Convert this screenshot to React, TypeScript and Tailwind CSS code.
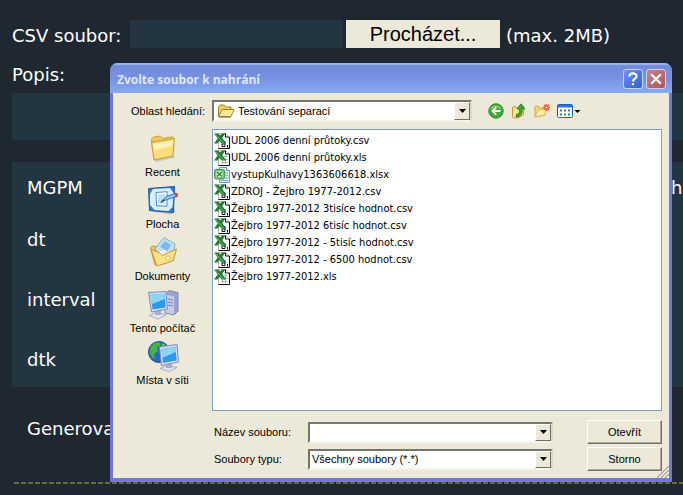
import { useState } from 'react';
import type { ReactNode } from 'react';

type FileKind = 'csv' | 'xls' | 'xlsx';

interface FileEntry {
  name: string;
  kind: FileKind;
}

const FILES: FileEntry[] = [
  { name: 'UDL 2006 denní průtoky.csv', kind: 'csv' },
  { name: 'UDL 2006 denní průtoky.xls', kind: 'xls' },
  { name: 'vystupKulhavy1363606618.xlsx', kind: 'xlsx' },
  { name: 'ZDROJ - Žejbro 1977-2012.csv', kind: 'csv' },
  { name: 'Žejbro 1977-2012 3tisíce hodnot.csv', kind: 'csv' },
  { name: 'Žejbro 1977-2012 6tisíc hodnot.csv', kind: 'csv' },
  { name: 'Žejbro 1977-2012 - 5tisíc hodnot.csv', kind: 'csv' },
  { name: 'Žejbro 1977-2012 - 6500 hodnot.csv', kind: 'csv' },
  { name: 'Žejbro 1977-2012.xls', kind: 'xls' },
];

const PLACES: { label: string; icon: ReactNode }[] = [
  { label: 'Recent', icon: <RecentIcon /> },
  { label: 'Plocha', icon: <DesktopIcon /> },
  { label: 'Dokumenty', icon: <DocumentsIcon /> },
  { label: 'Tento počítač', icon: <ComputerIcon /> },
  { label: 'Místa v síti', icon: <NetworkIcon /> },
];

export default function App() {
  return (
    <div className="relative min-h-screen overflow-hidden bg-[#1f2830] pb-3 font-['DejaVu_Sans',sans-serif] text-lg/6 text-white">
      <UploadForm />
      <FileDialog />
    </div>
  );
}

function UploadForm() {
  return (
    <form className="pt-5 pl-3" onSubmit={(e) => e.preventDefault()}>
      <div className="flex h-7 items-center">
        <label htmlFor="csv" className="w-[118px] shrink-0 whitespace-nowrap pt-1">
          CSV soubor:
        </label>
        <input id="csv" readOnly className="h-7 w-[213px] bg-[#223541] outline-none" />
        <button
          type="button"
          className="ml-[3px] h-7 w-[154px] bg-[#ece9d8] font-['Liberation_Sans',sans-serif] text-xl/7 text-black"
        >
          Procházet...
        </button>
        <span className="ml-1.5 whitespace-nowrap pt-1">(max. 2MB)</span>
      </div>

      <label htmlFor="popis" className="mt-[15px] block">
        Popis:
      </label>
      <textarea id="popis" className="mt-1.5 block h-[47px] w-full resize-none bg-[#223541] outline-none" />

      {/* Parameters */}
      <div className="mt-[22px] bg-[#223541] pt-[14px] pb-[15px] pl-[15px]">
        <div className="flex justify-between">
          <span>MGPM</span>
          <span className="w-3">ha</span>
        </div>
        <div className="mt-7">dt</div>
        <div className="mt-9">interval</div>
        <div className="mt-9">dtk</div>
      </div>

      <div className="mt-[30px] pl-[15px]">Generova</div>
      <div className="mt-[41px] ml-0.5 h-0.5 bg-[repeating-linear-gradient(90deg,#6b6b38_0_5px,transparent_5px_7px)]" />
    </form>
  );
}

function FileDialog() {
  const [fileName, setFileName] = useState('');

  return (
    <div
      role="dialog"
      aria-labelledby="dialog-title"
      className="absolute top-[63px] right-[11px] left-[110px] overflow-hidden rounded-t-lg bg-[#7377d8] px-[3px] pb-1 font-['Liberation_Sans',sans-serif] text-[11px]/4 text-black"
    >
      {/* Title bar */}
      <div className="-mx-[3px] flex h-[30px] items-center bg-linear-to-b from-[#7288d8] via-[#7791e2] to-[#86aaf1] pr-1.5 pl-[7px] shadow-[inset_0_2px_1px_#9db4f0]">
        <h1
          id="dialog-title"
          className="flex-1 pt-1 font-['Open_Sans',sans-serif] text-xs/4 font-bold text-[#dce6fb]"
        >
          Zvolte soubor k nahrání
        </h1>
        <button
          aria-label="Nápověda"
          className="mt-0.5 mr-[3px] flex size-5 items-center justify-center rounded-[3px] border border-[#c5d3f8] bg-linear-to-br from-[#6c93ee] to-[#315fdc]"
        >
          <svg viewBox="0 0 18 18" className="size-[18px]" fill="none" stroke="#fff" strokeWidth="2.2">
            <path d="M5.5 6.5C5.5 2.5 12.5 2.5 12.5 6.2C12.5 8.6 9 8.6 9 11.5" />
            <path d="M9 13v2.2" />
          </svg>
        </button>
        <button
          aria-label="Zavřít"
          className="mt-0.5 flex size-5 items-center justify-center rounded-[3px] border border-[#d0cfee] bg-linear-to-br from-[#c48390] to-[#ab5560]"
        >
          <svg viewBox="0 0 18 18" className="size-[18px]" stroke="#fff" strokeWidth="2.2">
            <path d="M4.2 4.2l9.6 9.6M13.8 4.2l-9.6 9.6" />
          </svg>
        </button>
      </div>

      <div className="relative bg-[#ece9d8] pt-[7px] pr-[7px] pb-[7px]">
        {/* Look-in row */}
        <div className="flex h-[22px] items-center">
          <label htmlFor="folder" className="w-[99px] shrink-0 pr-[7px] text-right whitespace-nowrap">
            Oblast hledání:
          </label>
          <Combo className="h-[22px] w-[260px]">
            <FolderIcon />
            <select id="folder" className="min-w-0 flex-1 appearance-none pl-[3px] outline-none">
              <option>Testování separací</option>
            </select>
          </Combo>
          <div className="ml-4 flex gap-[7px]">
            <button aria-label="Zpět">
              <BackIcon />
            </button>
            <button aria-label="O úroveň výš">
              <UpIcon />
            </button>
            <button aria-label="Nová složka">
              <NewFolderIcon />
            </button>
            <button aria-label="Zobrazit">
              <ViewsIcon />
            </button>
          </div>
        </div>

        <div className="mt-[7px] flex">
          {/* Places */}
          <nav className="flex w-[99px] shrink-0 flex-col pt-[3px]">
            {PLACES.map((place) => (
              <button key={place.label} className="flex h-[52px] flex-col items-center">
                {place.icon}
                <span className="whitespace-nowrap">{place.label}</span>
              </button>
            ))}
          </nav>

          <div className="min-w-0 flex-1">
            <ul className="h-[282px] border border-[#7f9db9] bg-white pt-0.5 pl-px font-['DejaVu_Sans_Condensed','DejaVu_Sans',sans-serif]">
              {FILES.map((file) => (
                <li key={file.name}>
                  <button className="flex h-[17px] items-center gap-px" onClick={() => setFileName(file.name)}>
                    <FileIcon kind={file.kind} />
                    <span className="whitespace-nowrap">{file.name}</span>
                  </button>
                </li>
              ))}
            </ul>

            <div className="mt-[9px] flex h-6 items-center pl-0.5">
              <label htmlFor="filename" className="w-[94px] shrink-0">
                Název souboru:
              </label>
              <Combo className="h-[21px] min-w-0 flex-1">
                <input
                  id="filename"
                  value={fileName}
                  onChange={(e) => setFileName(e.target.value)}
                  className="min-w-0 flex-1 px-0.5 outline-none"
                />
              </Combo>
              <DialogButton>Otevřít</DialogButton>
            </div>
            <div className="mt-[3px] flex h-6 items-center pl-0.5">
              <label htmlFor="filetype" className="w-[94px] shrink-0">
                Soubory typu:
              </label>
              <Combo className="h-[21px] min-w-0 flex-1">
                <select id="filetype" className="min-w-0 flex-1 appearance-none px-0.5 outline-none">
                  <option>Všechny soubory (*.*)</option>
                </select>
              </Combo>
              <DialogButton>Storno</DialogButton>
            </div>
          </div>
        </div>

        {/* Resize grip */}
        <svg viewBox="0 0 12 12" className="absolute right-0 bottom-0 size-3" stroke="#a5a18c" strokeWidth="1.3">
          <path d="M0 12L12 0M4 12l8-8M8 12l4-4" />
          <path d="M1.5 12L12 1.5M5.5 12L12 5.5M9.5 12L12 9.5" stroke="#fff" strokeWidth="0.7" />
        </svg>
      </div>
    </div>
  );
}

function Combo({ className, children }: { className: string; children: ReactNode }) {
  return (
    <div
      className={`flex items-center border-2 border-t-[#77746a] border-r-[#dedac8] border-b-[#f5f3ea] border-l-[#77746a] bg-white ${className}`}
    >
      {children}
      <span
        aria-hidden="true"
        className="flex h-full w-4 items-center justify-center border border-t-white border-r-[#716f64] border-b-[#716f64] border-l-white bg-[#ece9d8]"
      >
        <svg viewBox="0 0 7 4" className="h-1 w-[7px]">
          <path d="M0 0h7L3.5 4z" />
        </svg>
      </span>
    </div>
  );
}

function DialogButton({ children }: { children: ReactNode }) {
  return (
    <button className="ml-[34px] h-6 w-[75px] shrink-0 border border-t-white border-r-[#716f64] border-b-[#716f64] border-l-white bg-[#ece9d8] shadow-[inset_-1px_-1px_0_#aca899]">
      {children}
    </button>
  );
}

function FileIcon({ kind }: { kind: FileKind }) {
  if (kind === 'xlsx') {
    return (
      <svg viewBox="0 0 16 16" className="size-4">
        <path d="M5.5.5h7l3 3v12h-10z" fill="#dce9fa" stroke="#6d93cf" />
        <path d="M12.5.5v3h3" fill="#fff" stroke="#6d93cf" />
        <path d="M11 6h3M11 8.5h3M11 11h3M7 13.5h7" stroke="#7fa4dc" />
        <rect x=".5" y="2.5" width="10" height="9.5" rx="1.5" fill="#7cc07c" stroke="#4b9a55" />
        <rect x="2.5" y="4.5" width="6" height="5.5" fill="#eaf7e8" />
        <path d="M3 5l5 4.5M8 5L3 9.5" stroke="#268435" strokeWidth="1.5" />
      </svg>
    );
  }
  return (
    <svg viewBox="0 0 16 16" className="size-4">
      <path d="M4.5.5h7l4 3.500v11.500h-11z" fill="#fff" stroke="#b5b5b5" />
      <path d="M11.500.5v3.500h4v11.500h-11" fill="none" stroke="#111" />
      {kind === 'csv' ? (
        <>
          <path d="M8 8.500h3v5H8v-2.500h3" fill="none" stroke="#111" />
          <path d="M13.500 12v2.500" stroke="#111" />
        </>
      ) : (
        <path d="M10 6.500h4M10 9.500h4M7 12.500h7M11.500 5v9M8.500 11v3" stroke="#b5b5b5" />
      )}
      <path d="M0 .5h4.500L6 2.500 8 .5h3.500L8.200 5l4 5.500H7.500L5.500 8 3.500 10.500H0L3.700 5.500z" fill="#237c30" />
      <path d="M1.500 1.500l8 8.500" stroke="#7fc283" strokeWidth=".9" />
    </svg>
  );
}

function FolderIcon() {
  return (
    <svg viewBox="0 0 18 16" className="ml-[3px] h-4 w-[18px] shrink-0">
      <path d="M1.5 13V3.500L3 2h4l1.500 2H14v2.500" fill="#f3cf57" stroke="#a98320" />
      <path d="M1.5 13.500L5 6.500h12l-3 7z" fill="#ffe99a" stroke="#a98320" strokeLinejoin="round" />
      <path d="M2 14.300h12" stroke="#7d6420" strokeWidth=".7" />
    </svg>
  );
}

function BackIcon() {
  return (
    <svg viewBox="0 0 16 16" className="size-4">
      <circle cx="8" cy="8" r="7.2" fill="#3fa935" stroke="#2b8a26" />
      <path d="M3 5.500a6 5 0 0 1 10 0" fill="none" stroke="#8ed582" strokeWidth="1.5" />
      <path d="M12.500 8H5M8.200 4.300L4.500 8l3.700 3.700" fill="none" stroke="#fff" strokeWidth="2" />
    </svg>
  );
}

function UpIcon() {
  return (
    <svg viewBox="0 0 16 16" className="size-4">
      <path d="M1.5 14.500V5l1-1.500 3 .5 1 1 6-1.500v8.500l-6 3z" fill="#f9dc72" stroke="#c39b35" />
      <path d="M2 14.500l2.500-7 8-1.500" fill="none" stroke="#fff3b5" />
      <path d="M5.500 14c4.500-.5 6-3 5.500-8h3L10 .8 6 6h2.500c.4 3.500-.3 5-3 5.500z" fill="#36a836" stroke="#1c7222" strokeWidth=".8" />
    </svg>
  );
}

function NewFolderIcon() {
  return (
    <svg viewBox="0 0 16 16" className="size-4">
      <path d="M1 13.500V4l1-1 3 .5 1 1.500h5v7l-9 2z" fill="#f9d873" stroke="#d3a544" />
      <path d="M1.200 14L4 7l9-1-2.500 6z" fill="#fff0b2" stroke="#d9ad50" strokeWidth=".8" />
      <g stroke="#ef5a2a" strokeWidth="1.5">
        <path d="M12.500 1v7M9 4.500h7M10 2l5 5M15 2l-5 5" />
      </g>
      <circle cx="12.500" cy="4.500" r="1.100" fill="#fff" />
    </svg>
  );
}

function ViewsIcon() {
  return (
    <svg viewBox="0 0 24 16" className="h-4 w-6">
      <rect x=".5" y="1.5" width="15" height="13" rx="1" fill="#fff" stroke="#1f5fc4" />
      <path d="M1 2h14v2.500H1z" fill="#2e72dd" />
      <g fill="#456fae">
        <path d="M3 6.500h2v2H3zM7 6.500h2v2H7zM11 6.500h2v2h-2z" />
        <path d="M3 10.500h2v2H3zM11 10.500h2v2h-2z" />
      </g>
      <path d="M7 10.500h2v2H7z" fill="#3da04a" />
      <path d="M17.500 7h6l-3 3z" />
    </svg>
  );
}

function RecentIcon() {
  return (
    <svg viewBox="0 0 32 32" className="size-8">
      <path d="M6 27l20-3.500 2 2L9 30z" fill="#b8b39c" opacity=".6" />
      <path d="M4.500 10L5 6.500l1.500-1.500 7-1 2 2.500 10-1.700 1.500 2V11z" fill="#f1c95a" stroke="#cc9d36" />
      <path d="M4.500 10.500l23-4-1.500 17.500L7 28z" fill="#fbdc7d" stroke="#c79a38" strokeLinejoin="round" />
      <path d="M6 12l20-3.500-.5 5-18.500 5z" fill="#fff0b4" />
    </svg>
  );
}

function DesktopIcon() {
  return (
    <svg viewBox="0 0 32 32" className="size-8">
      <path d="M4 27.500l20 3 4-3-1-3z" fill="#9f9a85" opacity=".5" />
      <path d="M1.500 4.500l26-2-1 26-24-2z" fill="#2f7ad0" stroke="#1b57a8" strokeLinejoin="round" />
      <path d="M6 5l17-1 3.500 5-1 14-4 4-14-1-4.500-5V10z" fill="#d9eefc" />
      <path d="M9 8.500l11-.8v14.500l-10.500-.5z" fill="#fff" stroke="#438bd4" />
      <path d="M11 10.500l7-.5v10l-7-.3z" fill="#bcdffa" />
      <path d="M16 17l3-4.500 9-3 1.500 3-9 3z" fill="#8fc4f0" stroke="#245ea8" strokeWidth=".8" />
      <path d="M27.500 8.500l3.500 1-.5 3.500-2 .5z" fill="#d83c25" />
      <path d="M14 18.500l3-3" stroke="#22466f" strokeWidth="1.5" />
    </svg>
  );
}

function DocumentsIcon() {
  return (
    <svg viewBox="0 0 32 32" className="size-8">
      <path d="M3.500 12l2-2 6 1 2 3 13-1v11L8 29z" fill="#f0c757" stroke="#c5972f" />
      <path d="M8 12.500L17 1.500 28 8l-1.500 11-13 4z" fill="#c4e1f8" stroke="#6da0cc" strokeWidth=".8" />
      <path d="M13 11l5-6 6 4-3.500 6z" fill="#80b9e8" />
      <path d="M13 16.500l5-1.500M13 19l9-3" stroke="#fff" strokeWidth="1.5" />
      <path d="M4 13.500l8 3 3 3L29.500 13 26 25 10 30z" fill="#fde18a" stroke="#c5972f" strokeLinejoin="round" />
      <circle cx="21" cy="22" r="2.2" fill="#fff7cf" stroke="#d3a944" strokeWidth=".8" />
    </svg>
  );
}

function ComputerIcon() {
  return (
    <svg viewBox="0 0 32 32" className="size-8">
      <path d="M18 6l4-3.500 9 2V23l-4 4-9-2z" fill="#9ba2cf" stroke="#7279a9" strokeWidth=".8" />
      <path d="M18.500 6.500l8.500 2v18l-8.500-2z" fill="#c8cce6" />
      <path d="M21 11l5 1M21 14l5 1M21 17l5 1" stroke="#7f86b5" />
      <path d="M2 27.500l8-3.500 9 3-8 4z" fill="#e2e4f1" stroke="#9a9ec0" strokeWidth=".8" />
      <path d="M8 21h6v6H8z" fill="#a9aed0" />
      <path d="M1.500 4.500l17.500-1 1.500 17.500-16 3z" fill="#d7dcf0" stroke="#8289b5" strokeLinejoin="round" />
      <path d="M3.500 6.500l14-.8 1.200 13.800-13 2z" fill="#2d9ae9" />
      <path d="M3.500 6.500l14-.8.5 5.300-14 5.500z" fill="#8bd4fb" />
    </svg>
  );
}

function NetworkIcon() {
  return (
    <svg viewBox="0 0 32 32" className="size-8">
      <circle cx="12" cy="12" r="10.5" fill="#2769c5" stroke="#194b99" />
      <path d="M3 8c2-4 5-6 9-6l2 3-4 2 1 4-4 3 1 5-3-2-2.500-4z" fill="#4bb344" />
      <path d="M15 3l5 3v4l-5-1z" fill="#65c556" />
      <path d="M13 28.500l8-3.500 9 2.500-8 4z" fill="#e2e4f1" stroke="#9a9ec0" strokeWidth=".8" />
      <path d="M19 23h6v5h-6z" fill="#a9aed0" />
      <path d="M12.500 7L30 4.500 31.500 22l-17 3.500z" fill="#d7dcf0" stroke="#8289b5" strokeLinejoin="round" />
      <path d="M14.500 9l14-2 1.200 13.500L16 23z" fill="#2d9ae9" />
      <path d="M14.500 9l14-2 .4 5L15 18z" fill="#8bd4fb" />
    </svg>
  );
}
